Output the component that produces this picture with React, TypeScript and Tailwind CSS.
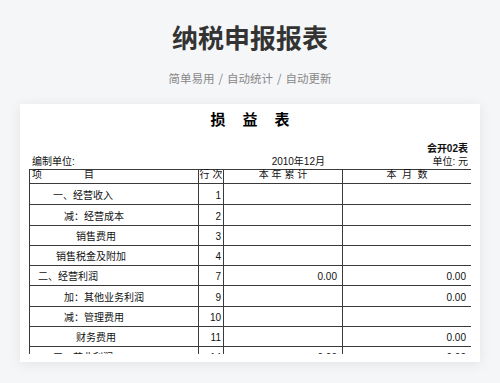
import React from 'react';

interface Row {
  label: string;
  indent: number;
  no: string;
  year: string;
  month: string;
  h: number;
}

const rows: Row[] = [
  { label: '一、经营收入', indent: 23, no: '1', year: '', month: '', h: 21 },
  { label: '减：经营成本', indent: 34, no: '2', year: '', month: '', h: 21 },
  { label: '销售费用', indent: 46, no: '3', year: '', month: '', h: 20 },
  { label: '销售税金及附加', indent: 26, no: '4', year: '', month: '', h: 20 },
  { label: '二、经营利润', indent: 8, no: '7', year: '0.00', month: '0.00', h: 20 },
  { label: '加：其他业务利润', indent: 34, no: '9', year: '', month: '0.00', h: 21 },
  { label: '减：管理费用', indent: 34, no: '10', year: '', month: '', h: 20 },
  { label: '财务费用', indent: 46, no: '11', year: '', month: '0.00', h: 20 },
  { label: '三、营业利润', indent: 23, no: '14', year: '0.00', month: '0.00', h: 20 },
];

const cell = 'border-r border-b border-[#3a3a3a] flex items-end pb-px leading-[14px]';

export default function App() {
  return (
    <div className="w-[500px] h-[383px] overflow-hidden bg-[#f5f6f8] flex flex-col items-center font-['Noto_Sans_CJK_SC',sans-serif]">
      <h1 className="mt-[20px] text-[26px] leading-[34px] font-bold text-[#333]">纳税申报报表</h1>
      <p className="mt-[16px] text-[11.5px] leading-[16px] text-[#888] flex">
        <span>简单易用</span>
        <span className="mx-[4px]">/</span>
        <span>自动统计</span>
        <span className="mx-[4px]">/</span>
        <span>自动更新</span>
      </p>

      <div className="mt-[18px] w-[460px] h-[258px] bg-white shadow-[0_2px_12px_rgba(0,0,0,0.08)] flex flex-col px-[9px] pt-[4px] pb-[8px] font-['Liberation_Sans','Noto_Sans_CJK_SC',sans-serif] text-[10px] text-[#111]">
        <div className="flex justify-center gap-[17px] text-[15px] leading-[22px] font-bold font-['Noto_Sans_CJK_SC',sans-serif] text-black">
          <span>损</span>
          <span>益</span>
          <span>表</span>
        </div>
        <div className="mt-[12px] flex justify-end pr-[3px] font-bold leading-[14px]">会开02表</div>
        <div className="grid grid-cols-[169px_145px_128px] leading-[12px] h-[13px]">
          <span className="pl-[3px]">编制单位:</span>
          <span className="text-right pr-[18px]">2010年12月</span>
          <span className="text-right pr-[3px]">单位: 元</span>
        </div>

        <div className="flex-1 overflow-hidden">
          <div className="grid grid-cols-[169px_25px_119px_129px] border-l border-t border-[#3a3a3a]">
            <div className={`${cell} h-[14px] items-center pb-0 pl-[2px]`}>
              <span>项</span>
              <span className="ml-[42px]">目</span>
            </div>
            <div className={`${cell} h-[14px] items-center pb-0 justify-center whitespace-pre`}>行 次</div>
            <div className={`${cell} h-[14px] items-center pb-0 justify-center whitespace-pre`}>本 年 累 计</div>
            <div className={`${cell} h-[14px] items-center pb-0 justify-center whitespace-pre`}>本  月  数</div>

            {rows.map((r) => (
              <React.Fragment key={r.no}>
                <div className={cell} style={{ height: r.h, paddingLeft: r.indent }}>
                  {r.label}
                </div>
                <div className={`${cell} justify-end pr-[2px]`} style={{ height: r.h }}>
                  {r.no}
                </div>
                <div className={`${cell} justify-end pr-[5px]`} style={{ height: r.h }}>
                  {r.year}
                </div>
                <div className={`${cell} justify-end pr-[5px]`} style={{ height: r.h }}>
                  {r.month}
                </div>
              </React.Fragment>
            ))}
          </div>
        </div>
      </div>
    </div>
  );
}
